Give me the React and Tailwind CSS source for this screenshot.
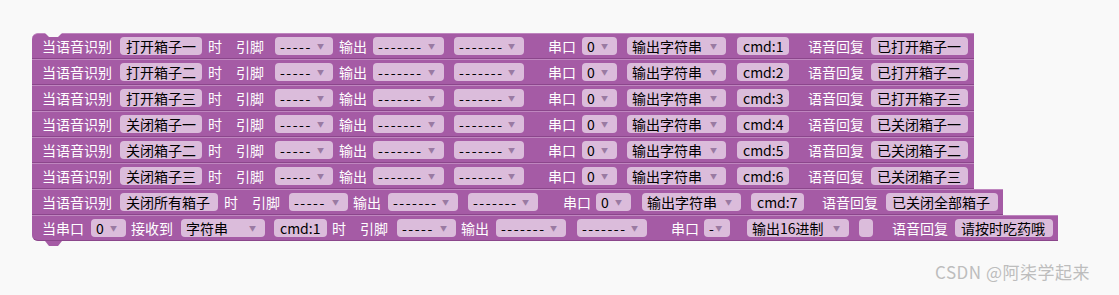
import React from 'react';

const BLOCK = 'bg-[#a55ba5]';

function Label({ text, className = '' }) {
  return <span className={`text-white whitespace-nowrap ${className}`}>{text}</span>;
}

function Field({ text, className = '' }) {
  return (
    <span className={`h-[18px] rounded-[4px] bg-[#dbbcdb] px-[6px] text-black leading-[18px] whitespace-nowrap ${className}`}>
      {text}
    </span>
  );
}

function Drop({ text, className = '' }) {
  const dashes = text.startsWith('-');
  return (
    <span className={`h-[18px] rounded-[4px] bg-[#dbbcdb] pl-[5px] pr-[9px] flex items-center justify-between text-black leading-[18px] whitespace-nowrap ${className}`}>
      <span className={dashes ? 'tracking-[1.5px]' : ''}>{text}</span>
      <span className="text-[7px] text-[#9a7aa2]">▼</span>
    </span>
  );
}

function Row({ items, className = '' }) {
  return (
    <div className={`relative h-[26px] flex items-center pl-[10px] ${BLOCK} border-t border-t-[#bf86bf] border-b border-b-[#8b468b] ${className}`}>
      {items.map(([Kind, text, cls], i) => (
        <Kind key={i} text={text} className={cls} />
      ))}
    </div>
  );
}

const boxRows = [
  ['打开箱子一', '1', '已打开箱子一'],
  ['打开箱子二', '2', '已打开箱子二'],
  ['打开箱子三', '3', '已打开箱子三'],
  ['关闭箱子一', '4', '已关闭箱子一'],
  ['关闭箱子二', '5', '已关闭箱子二'],
  ['关闭箱子三', '6', '已关闭箱子三'],
];

const voiceItems = (name, n, reply) => [
  [Label, '当语音识别', ''],
  [Field, name, 'ml-[8px] w-[82px]'],
  [Label, '时', 'ml-[6px]'],
  [Label, '引脚', 'ml-[14px]'],
  [Drop, '-----', 'ml-[11px] w-[58px]'],
  [Label, '输出', 'ml-[6px]'],
  [Drop, '-------', 'ml-[6px] w-[71px]'],
  [Drop, '-------', 'ml-[10px] w-[70px]'],
  [Label, '串口', 'ml-[24px]'],
  [Drop, '0', 'ml-[6px] w-[35px]'],
  [Drop, '输出字符串', 'ml-[10px] w-[99px]'],
  [Field, `cmd:${n}`, 'ml-[11px] w-[52px]'],
  [Label, '语音回复', 'ml-[19px]'],
  [Field, reply, 'ml-[7px] w-[97px]'],
];

const row7 = [
  [Label, '当语音识别', ''],
  [Field, '关闭所有箱子', 'ml-[8px] w-[98px]'],
  [Label, '时', 'ml-[6px]'],
  [Label, '引脚', 'ml-[14px]'],
  [Drop, '-----', 'ml-[9px] w-[59px]'],
  [Label, '输出', 'ml-[5px]'],
  [Drop, '-------', 'ml-[7px] w-[70px]'],
  [Drop, '-------', 'ml-[10px] w-[70px]'],
  [Label, '串口', 'ml-[25px]'],
  [Drop, '0', 'ml-[5px] w-[35px]'],
  [Drop, '输出字符串', 'ml-[11px] w-[99px]'],
  [Field, 'cmd:7', 'ml-[10px] w-[53px]'],
  [Label, '语音回复', 'ml-[18px]'],
  [Field, '已关闭全部箱子', 'ml-[8px] w-[112px]'],
];

const row8 = [
  [Label, '当串口', ''],
  [Drop, '0', 'ml-[7px] w-[35px]'],
  [Label, '接收到', 'ml-[5px]'],
  [Drop, '字符串', 'ml-[8px] w-[84px]'],
  [Field, 'cmd:1', 'ml-[9px] w-[53px]'],
  [Label, '时', 'ml-[5px]'],
  [Label, '引脚', 'ml-[14px]'],
  [Drop, '-----', 'ml-[9px] w-[59px]'],
  [Label, '输出', 'ml-[5px]'],
  [Drop, '-------', 'ml-[7px] w-[70px]'],
  [Drop, '-------', 'ml-[11px] w-[70px]'],
  [Label, '串口', 'ml-[24px]'],
  [Drop, '-', 'ml-[5px] w-[26px]'],
  [Drop, '输出16进制', 'ml-[17px] w-[102px]'],
  [Field, '', 'ml-[10px] w-[14px]'],
  [Label, '语音回复', 'ml-[19px]'],
  [Field, '请按时吃药哦', 'ml-[7px] w-[98px]'],
];

export default function App() {
  return (
    <div
      className="relative h-[295px] w-full bg-[#f9f9f9] overflow-hidden text-[14px]"
      style={{ fontFamily: '"Noto Sans CJK SC", "Noto Sans", sans-serif' }}
    >
      <div className="relative pt-[33px] pl-[32px] flex flex-col items-start">
        {boxRows.map(([name, n, reply], i) => (
          <Row
            key={i}
            items={voiceItems(name, n, reply)}
            className={`w-[942px] pr-[6px] ${i === 0 ? 'rounded-tl-[6px]' : ''}`}
          />
        ))}
        <Row items={row7} className="w-[971px] pr-[5px]" />
        <Row items={row8} className="w-[1026px] pr-[5px] rounded-bl-[6px]" />

        {/* top notch + bottom tab */}
        <svg className="absolute left-[45px] top-[33px]" width="18" height="5" viewBox="0 0 18 5">
          <path d="M0 0 L4 4 L13 4 L17 0 Z" fill="#f9f9f9" />
        </svg>
        <svg className="absolute left-[45px] top-[241px]" width="18" height="6" viewBox="0 0 18 6">
          <path d="M0 0 L4 5 L13 5 L17 0 Z" fill="#a55ba5" />
        </svg>
      </div>

      <div className="absolute right-[29px] bottom-[11px] text-[17px] text-[#bdbdbd] tracking-[0.5px]">
        CSDN @阿柒学起来
      </div>
    </div>
  );
}
